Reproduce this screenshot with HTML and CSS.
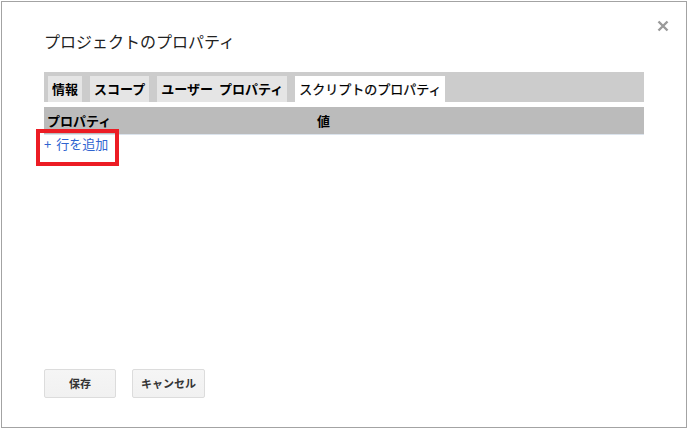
FILE: index.html
```html
<!DOCTYPE html>
<html lang="ja">
<head>
<meta charset="utf-8">
<title>プロジェクトのプロパティ</title>
<link rel="stylesheet" href="styles.css">
</head>
<body>
<div class="dialog">
  <div class="close" aria-label="閉じる">
    <svg width="12" height="12" viewBox="0 0 12 12"><path d="M1.5 1.5 L10.5 10.5 M10.5 1.5 L1.5 10.5" stroke="#9a9a9a" stroke-width="2.4" stroke-linecap="butt"/></svg>
  </div>
  <div class="title">プロジェクトのプロパティ</div>
  <div class="tabbar">
    <div class="tab">情報</div>
    <div class="tab">スコープ</div>
    <div class="tab">ユーザー プロパティ</div>
    <div class="tab active">スクリプトのプロパティ</div>
  </div>
  <div class="thead">
    <div class="th">プロパティ</div>
    <div class="th">値</div>
  </div>
  <div class="addrow"><a class="link" href="#">+ 行を追加</a></div>
  <div class="highlight"></div>
  <div class="buttons">
    <button class="btn">保存</button>
    <button class="btn">キャンセル</button>
  </div>
</div>
</body>
</html>
```

FILE: styles.css
```css
html, body {
  margin: 0;
  padding: 0;
  background: #ffffff;
}
body {
  padding: 1px 0 0 1px;
  font-family: "Noto Sans CJK JP", "Noto Sans", sans-serif;
  color: #000;
}
.dialog {
  position: relative;
  box-sizing: border-box;
  width: 686px;
  height: 427px;
  border: 1px solid #a3a3a3;
  padding: 29px 0 29px 42px;
  display: flex;
  flex-direction: column;
}
.close {
  position: absolute;
  left: 655px;
  top: 18px;
  width: 12px;
  height: 12px;
}
.close svg { display: block; }
.title {
  font-size: 16px;
  line-height: 20px;
  height: 20px;
  color: #222;
}
.tabbar {
  margin-top: 21px;
  width: 600px;
  height: 30px;
  box-sizing: border-box;
  background: #cccccc;
  padding: 4px 4px 0 4px;
  display: flex;
  gap: 8px;
}
.tab {
  background: #e5e5e5;
  height: 26px;
  line-height: 26px;
  padding: 0 4px;
  font-size: 13px;
  font-weight: bold;
  color: #000;
  white-space: nowrap;
  word-spacing: 3px;
}
.tab.active {
  background: #ffffff;
  font-weight: normal;
  color: #000;
  -webkit-text-stroke: 0.25px #000;
}
.thead {
  margin-top: 5px;
  width: 600px;
  height: 28px;
  box-sizing: border-box;
  background: #bbbbbb;
  border-bottom: 1px solid #dbe3ec;
  display: grid;
  grid-template-columns: 270px 1fr;
}
.th {
  font-size: 13px;
  font-weight: bold;
  line-height: 27px;
  padding-left: 3px;
  color: #000;
}
.addrow {
  font-size: 13px;
  line-height: 18px;
}
.link {
  color: #2f64d0;
  text-decoration: none;
  word-spacing: 2px;
}
.highlight {
  position: absolute;
  left: 34px;
  top: 127px;
  width: 75px;
  height: 29px;
  border: 4px solid #ec1c24;
}
.buttons {
  margin-top: auto;
  display: flex;
  gap: 16px;
}
.btn {
  box-sizing: border-box;
  height: 29px;
  min-width: 72px;
  padding: 0 8px;
  border: 1px solid #dcdcdc;
  border-radius: 2px;
  background: linear-gradient(#f5f5f5, #f1f1f1);
  font-family: "Noto Sans CJK JP", "Noto Sans", sans-serif;
  font-size: 11px;
  font-weight: bold;
  color: #333;
  line-height: 27px;
}
```
